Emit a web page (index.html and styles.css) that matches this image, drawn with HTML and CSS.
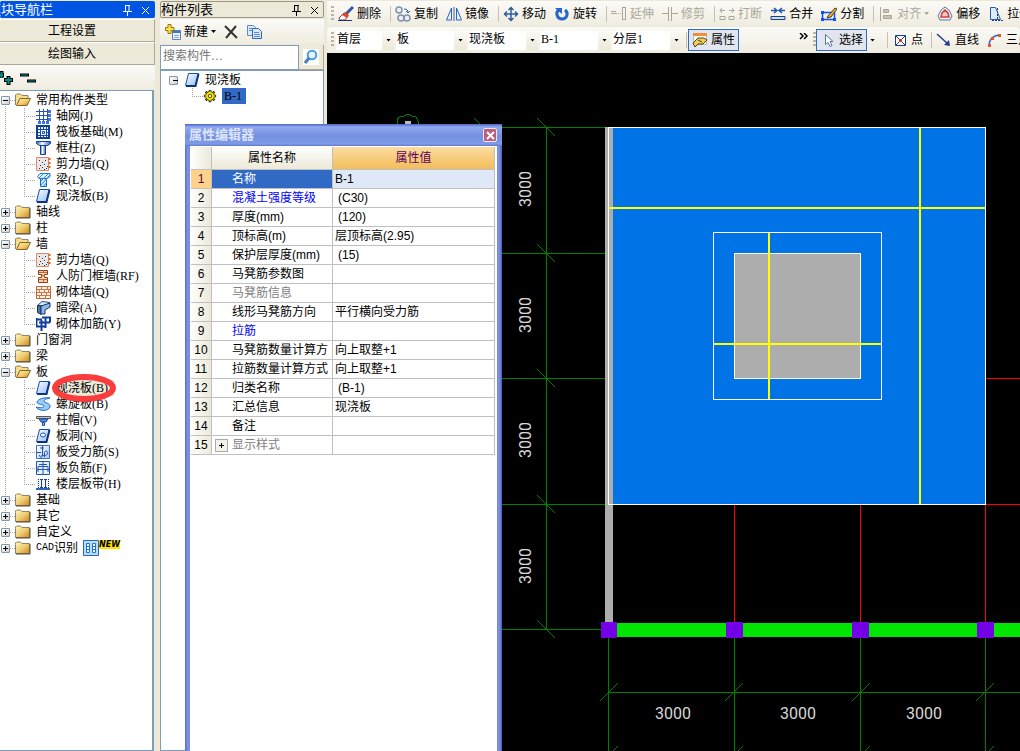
FILE: index.html
```html
<!DOCTYPE html>
<html lang="zh-CN">
<head>
<meta charset="utf-8">
<title>绘图输入</title>
<link rel="stylesheet" href="styles.css">
<script src="app.js" defer></script>
</head>
<body>
<svg class="defs" aria-hidden="true">
  <defs>
    <linearGradient id="gFold" x1="0" y1="0" x2="1" y2="1"><stop offset="0" stop-color="#fff3c0"/><stop offset=".5" stop-color="#f0cf74"/><stop offset="1" stop-color="#d08a08"/></linearGradient>
    <linearGradient id="gSlab" x1="0" y1="0" x2="1" y2="1"><stop offset="0" stop-color="#fff"/><stop offset="1" stop-color="#8fbdf8"/></linearGradient>
    <linearGradient id="gCol" x1="0" y1="0" x2="1" y2="0"><stop offset="0" stop-color="#2b62c8"/><stop offset=".4" stop-color="#fff"/><stop offset="1" stop-color="#2b62c8"/></linearGradient>
    <linearGradient id="gPale" x1="0" y1="0" x2="1" y2="1"><stop offset="0" stop-color="#fff"/><stop offset="1" stop-color="#a9c9f5"/></linearGradient>
  </defs>
  <symbol id="folder" viewBox="0 0 16 16"><path d="M.5 4.500V3l1-1h4l1.500 1.500H14.500V13.500H.5z" fill="url(#gFold)" stroke="#8c8468"/><path d="M15 4v10H1" fill="none" stroke="#4b4636"/></symbol>
  <symbol id="open" viewBox="0 0 16 16"><path d="M.5 13V3l1-1h4l1.500 1.500H13V7" fill="#f6dd8d" stroke="#8c8468"/><path d="M1.500 13.500L5 6.500h10.500L12 13.500z" fill="url(#gFold)" stroke="#8a661a"/></symbol>
  <symbol id="grid" viewBox="0 0 15 16"><path d="M3.500 1v13M7.500 1v13M11.500 1v13M0 3.500h13M0 7.500h13M0 11.500h13" stroke="#2a4fc0" fill="none"/><path d="M12 2h3v3h-3zM12 6h3v3h-3zM12 10h3v3h-3zM2 13h3v3H2zM6 13h3v3H6zM10 13h3v3h-3z" fill="#3f74dd"/></symbol>
  <symbol id="raft" viewBox="0 0 15 16"><path d="M1 2h12v12H1z" fill="#eaf3ff" stroke="#0f3f94" stroke-width="2"/><path d="M4.500 3v10M10.500 3v10M2 5.500h11M2 11.500h11M7.500 2v3M7.500 12v3M1 8.500h3M11 8.500h3" stroke="#174a9e" fill="none"/><path d="M6.500 7.500h2v2h-2z" fill="#fff" stroke="#174a9e"/></symbol>
  <symbol id="column" viewBox="0 0 15 16"><path d="M.5 1.500h14v2l-3 2h-8l-3-2z" fill="url(#gCol)" stroke="#173f96"/><path d="M4.500 5.500h5v9h-5z" fill="url(#gCol)" stroke="#173f96"/></symbol>
  <symbol id="shear" viewBox="0 0 15 16"><path d="M.5 1.500h12v13H.5z" fill="#e9e7e8" stroke="#d98a68"/><path d="M3 4h1v1H3zM6 6h1v1H6zM4 9h1v1H4zM8 8h1v1H8zM6 11h1v1H6zM10 12h1v1h-1zM9 4h1v1H9zM3 12h1v1H3zM11 10h1v1h-1zM8 13h1v1H8z" fill="#333"/><path d="M13.500 2v12" stroke="#d5661d" stroke-width="2" stroke-dasharray="2 2"/></symbol>
  <symbol id="beam" viewBox="0 0 15 16"><path d="M1.500 4.500L4 1.500h10v3l-3 2H3z" fill="#d9f0ff" stroke="#1b79ca"/><path d="M4.500 6.500h6v8h-6z" fill="#c4e8ff" stroke="#1769c0"/><path d="M5 13l9-10M3 6l5-5M5 9l7-7M8 14l3-4" fill="none" stroke="#2f8fdc"/></symbol>
  <symbol id="slab" viewBox="0 0 15 16"><path d="M3.500 1.500h10l-3 12H.5z" fill="url(#gSlab)" stroke="#154dab"/><path d="M13.500 2l-3 12H1" fill="none" stroke="#0d3480" stroke-width="2"/></symbol>
  <symbol id="frame" viewBox="0 0 15 16"><path d="M2.500 2.500h9v4h-3v3h3v5h-9v-5h3v-3h-3z" fill="#f7cfb0" stroke="#993f16"/><path d="M3 4.500h8M6 7.500h3M3 11.500h8M7.500 2v2M7.500 12v2" stroke="#bb6b3b"/></symbol>
  <symbol id="brick" viewBox="0 0 15 16"><path d="M.5 2.500h14v12H.5z" fill="#fff0e4" stroke="#c0673a"/><path d="M1 5.500h14M1 8.500h14M1 11.500h14M5.500 3v2.500M11.500 3v2.500M3.500 6v2.500M8.500 6v2.500M12.500 6v2.500M5.500 9v2.500M10.500 9v2.500M3.500 12v2M9.500 12v2" stroke="#cd7749" fill="none"/></symbol>
  <symbol id="hidden" viewBox="0 0 15 16"><path d="M1.500 5.500L6 1.500l8 1-4 3.500z" fill="#d8eafc" stroke="#244b89"/><path d="M1.500 5.500L5 6v8.500l-3.500-2z" fill="#50749f" stroke="#183663"/><path d="M5 6l9-3v4l-5 3v4H5z" fill="#8db6e4" stroke="#183663"/></symbol>
  <symbol id="rebar" viewBox="0 0 15 16"><path d="M.5 2v9M5.500 4v11M9.500 1v11M0 3.500h6M3 6.500h11M0 10.500h9M6 1.500h8v5" stroke="#113e9d" fill="none" stroke-width="2"/></symbol>
  <symbol id="spiral" viewBox="0 0 15 16"><path d="M14 2C8 1 2 3 1 6c0 3 7 2 7 4s-4 2-8 1c2 4 12 5 14 0 1-4-6-4-6-6s3-2 6-3z" fill="#9ccdfa" stroke="#1e6bc2"/></symbol>
  <symbol id="cap" viewBox="0 0 15 16"><path d="M.5 4.500h14v2H.5z" fill="#c2c5cb" stroke="#555"/><path d="M3 7h9l-2 3H5z" fill="#5d8de0" stroke="#1b49a3"/><path d="M6.500 10.500h2v3h-2z" fill="#afcaf7" stroke="#1b49a3"/></symbol>
  <symbol id="hole" viewBox="0 0 15 16"><path d="M3.500 1.500h10l-3 12H.5z" fill="url(#gSlab)" stroke="#154dab"/><path d="M13.500 2l-3 12H1" fill="none" stroke="#0d3480" stroke-width="2"/><ellipse cx="7" cy="7" rx="2.500" ry="2" fill="#fff" stroke="#154dab"/></symbol>
  <symbol id="stress" viewBox="0 0 15 16"><path d="M.5 1.500h13v13H.5z" fill="url(#gPale)" stroke="#3f6fc8"/><path d="M6.500 2v9c0 3-3 3-3 0M8 4H4M1 8.500h4M8.500 13V8.500c0-2 4-2 3 1s-4 2-6 2" stroke="#2450ac" fill="none"/></symbol>
  <symbol id="neg" viewBox="0 0 15 16"><path d="M.5 1.500h13v13H.5z" fill="#e8f1ff" stroke="#1d55b8"/><path d="M7 2v12M2 12V6.500h10V12M3 4.500h8M1 9.500h12" stroke="#1d55b8" fill="none"/></symbol>
  <symbol id="strip" viewBox="0 0 15 16"><path d="M0 3h14v8H0z" fill="#edf5ff"/><path d="M0 12h14v2H0z" fill="#2d65c2"/><path d="M5.500 3v9M9.500 3v9M4 3.500h3M8 3.500h3M4 11.500h3M8 11.500h3" stroke="#1b3e87"/><path d="M2.500 3v9M12.500 3v9" stroke="#333" stroke-dasharray="1 1"/></symbol>
  <symbol id="gear" viewBox="0 0 16 16"><path d="M8 1v14M1 8h14M3 3l10 10M13 3L3 13" stroke="#3a3600" stroke-width="3"/><circle cx="8" cy="8" r="5" fill="#f6e800" stroke="#3a3600"/><path d="M8 2v12M2 8h12M4 4l8 8M12 4l-8 8" stroke="#ffee00"/><circle cx="8" cy="8" r="2" fill="#fff8a0" stroke="#3a3600"/></symbol>
</svg>

<div class="app">
  <aside class="nav">
    <header class="title active"><span class="clipstart">模块导航栏</span>
      <button class="tb" aria-label="固定"><svg width="9" height="12" viewBox="0 0 9 12"><path d="M2.500 1v6M2 1.500h5M6 1v6M0 7.500h9M4.500 8v4" stroke="currentColor" fill="none"/></svg></button>
      <button class="tb" aria-label="关闭"><svg width="9" height="12" viewBox="0 0 9 12"><path d="M1 3l7 7M8 3l-7 7" stroke="currentColor"/></svg></button>
    </header>
    <button class="section">工程设置</button>
    <button class="section">绘图输入</button>
    <div class="navtools">
      <button class="bare" aria-label="全部展开"><svg width="14" height="16" viewBox="0 0 14 16"><path d="M0 5h4M1.500 1v7M4 10h9M8.500 6v9" stroke="#000" stroke-width="4"/><path d="M0 5h3M1.500 2v6M5 10h7M8.500 7v7" stroke="#008f88" stroke-width="2"/></svg></button>
      <button class="bare" aria-label="全部折叠"><svg width="18" height="16" viewBox="0 0 18 16"><path d="M0 5h9M7 11h9" stroke="#000" stroke-width="3"/><path d="M1 5h7M8 11h7" stroke="#008f88"/></svg></button>
    </div>
    <ul class="tree" id="tree"></ul>
  </aside>

  <section class="parts">
    <header class="title"><span>构件列表</span>
      <button class="tb" aria-label="固定"><svg width="9" height="12" viewBox="0 0 9 12"><path d="M2.500 1v6M2 1.500h5M6 1v6M0 7.500h9M4.500 8v4" stroke="currentColor" fill="none"/></svg></button>
      <button class="tb" aria-label="关闭"><svg width="9" height="12" viewBox="0 0 9 12"><path d="M1 3l7 7M8 3l-7 7" stroke="currentColor"/></svg></button>
    </header>
    <div class="parttools">
      <button class="bare"><svg width="16" height="16" viewBox="0 0 16 16"><path d="M7.500 6.500h8v9h-8z" fill="#eef5ff" stroke="#5c7fb5"/><path d="M8 7h7v2H8z" fill="#3a76d8"/><path d="M9 11.500h5M9 13.500h5" stroke="#7fa5de"/><path d="M3 .5h3v3h3v3H6v3H3v-3H.5v-3H3z" fill="#ffe14a" stroke="#9a7410"/></svg>新建<i class="arrow"></i></button>
      <button class="bare" aria-label="删除"><svg width="14" height="16" viewBox="0 0 14 16"><path d="M1 2l12 12M12 2L2 14" stroke="#333" stroke-width="2"/></svg></button>
      <button class="bare" aria-label="复制"><svg width="16" height="16" viewBox="0 0 16 16"><path d="M1.500 1.500h6l2 2v8h-8z" fill="#dceaff" stroke="#5b8ad0"/><path d="M6.500 4.500h6l3 3v7h-9z" fill="#dceaff" stroke="#2f63b5"/><path d="M3 4.500h3M3 6.500h3M8 8.500h5M8 10.500h6M8 12.500h6" stroke="#5b8ad0"/></svg></button>
    </div>
    <div class="search"><input type="text" aria-label="搜索构件" placeholder="搜索构件…"><button aria-label="搜索"><svg width="16" height="16" viewBox="0 0 16 16"><path d="M0 0h16v16H0z" fill="#fff"/><circle cx="9" cy="6" r="4.300" fill="#e4f5ff" stroke="#4c9cdc" stroke-width="2"/><path d="M6 9l-4 5" stroke="#3f7fc8" stroke-width="3"/></svg></button></div>
    <ul class="parttree">
      <li class="root"><i class="toggle"></i><svg width="15" height="16"><use href="#slab"/></svg>现浇板</li>
      <li class="leaf"><svg width="14" height="14"><use href="#gear"/></svg><span class="picked">B-1</span></li>
    </ul>
  </section>

  <main class="work">
    <div class="bar" id="bar"></div>
    <div class="bar second">
      <i class="grip"></i>
      <span class="combo narrow"><select aria-label="楼层"><option>首层</option></select><i class="arrow"></i></span>
      <span class="combo"><select aria-label="类型"><option>板</option></select><i class="arrow"></i></span>
      <span class="combo"><select aria-label="构件类型"><option>现浇板</option></select><i class="arrow"></i></span>
      <span class="combo"><select aria-label="构件"><option>B-1</option></select><i class="arrow"></i></span>
      <span class="combo"><select aria-label="分层"><option>分层1</option></select><i class="arrow"></i></span>
      <i class="sep tight"></i>
      <button class="tool on"><svg width="16" height="16" viewBox="0 0 16 16"><path d="M1.500 1.500h13v11h-13z" fill="#fff" stroke="#b9b9b9"/><path d="M1 1h14v3H1z" fill="#f08d3c"/><path d="M1 11l5-5h6l3 2-4 4H6l-3 3z" fill="#f3cc57" stroke="#4d431d"/><path d="M6 8l4 2" stroke="#4d431d"/></svg>属性</button>
      <button class="more" aria-label="更多"><svg width="9" height="7" viewBox="0 0 9 7"><path d="M1 0l3 3-3 3M5 0l3 3-3 3" fill="none" stroke="#000" stroke-width="1.500"/></svg></button>
      <i class="grip"></i>
      <button class="tool on pick"><svg width="16" height="16" viewBox="0 0 16 16"><path d="M5.500 2.500v10l2.500-2 2 4 2-1-2-4h3z" fill="#fff" stroke="#5575a5"/></svg>选择</button>
      <i class="arrow free"></i>
      <i class="sep"></i>
      <button class="tool"><svg width="16" height="16" viewBox="0 0 16 16"><path d="M3.500 3.500h10v10h-10z" fill="#fff" stroke="#1a3a92"/><path d="M4 4l9 9M13 4l-9 9" stroke="#1a3a92"/><path d="M7 7h3v3H7z" fill="#e0302c"/></svg>点</button>
      <i class="sep"></i>
      <button class="tool"><svg width="16" height="16" viewBox="0 0 16 16"><path d="M1 2l11 10" stroke="#1c3f94" stroke-width="1.500"/><path d="M14 14l-6-1 5-5z" fill="#1c3f94"/></svg>直线</button>
      <button class="tool"><svg width="16" height="16" viewBox="0 0 16 16"><path d="M2 14C2 7 7 3 13 3" stroke="#3d6bc0" stroke-width="1.600" fill="none"/><path d="M1 12h3v3H1zM4 5h3v3H4zM11 2h3v3h-3z" fill="#e25630"/></svg>三点画弧</button>
    </div>
    <svg class="drawing" role="img" aria-label="平面图"><g transform="translate(-327 -53)" shape-rendering="crispEdges">
      <g stroke="#008000" fill="none">
        <path d="M327 127.500H608M327 253.500H605M327 378.500H605M327 504.500H605M327 629.500H601M546.500 127V629"/>
        <path d="M608.500 638V751M734.500 638V751M860.500 638V751M985.500 638V751M608 692.500H1020"/>
        <path d="M537 118l18 18M537 244l18 18M537 369l18 18M537 495l18 18M537 620l18 18M474 118l18 18"/>
        <path d="M600 701l18-18M725 701l18-18M852 701l18-18M976 701l18-18M600 764l18-18M725 764l18-18M852 764l18-18M976 764l18-18"/>
        <path d="M397 124v-4l2-3 5-1 4-2 4 2 4 1 2 4v5"/>
      </g>
      <path d="M405 121h6v3h-6z" fill="#bbb"/>
      <path d="M734.500 504V622M860.500 504V622M985.500 504V622M985 378.500H1020M985 504.500H1020" stroke="#f00"/>
      <path d="M605 127h8v495h-8z" fill="#adadad"/>
      <path d="M613 127h372v377H613z" fill="#0073e6"/>
      <path d="M608.500 127.500H985.500V504.500H608.500z" fill="none" stroke="#fff"/>
      <path d="M713.500 232.500H881.500V399.500H713.500z" fill="none" stroke="#fff"/>
      <path d="M734.500 253.500H860.500V378.500H734.500z" fill="#adadad" stroke="#fff"/>
      <path d="M609 208H985M920 128V504M714 344H881M769 233V399" stroke="#ff0" stroke-width="2"/>
      <path d="M617 623H1020v14H617z" fill="#00e600"/>
      <path d="M601 622h16v16h-16zM726 622h17v16h-17zM852 622h17v16h-17zM977 622h17v16h-17z" fill="#7300e6"/>
      <g class="dims" text-anchor="middle">
        <text x="673" y="719">3000</text><text x="798" y="719">3000</text><text x="924" y="719">3000</text>
        <text transform="translate(531 189) rotate(-90)">3000</text><text transform="translate(531 315) rotate(-90)">3000</text><text transform="translate(531 440) rotate(-90)">3000</text><text transform="translate(531 566) rotate(-90)">3000</text>
      </g>
    </g></svg>
  </main>
</div>

<section class="editor" aria-labelledby="edTitle">
  <header><h2 id="edTitle">属性编辑器</h2><button aria-label="关闭"><svg width="11" height="11" viewBox="0 0 11 11"><path d="M2 2l7 7M9 2l-7 7" stroke="#fff" stroke-width="2"/></svg></button></header>
  <div class="sheet">
    <table>
      <thead><tr><th class="num"></th><th class="name">属性名称</th><th class="val">属性值</th></tr></thead>
      <tbody id="props"></tbody>
    </table>
  </div>
</section>
</body>
</html>
```
FILE: styles.css
```css
* { box-sizing: border-box; }
body { margin: 0; overflow: hidden; background: #ece9d8; color: #000; font: 12px/16px "Liberation Serif", "Noto Sans CJK SC", serif; }
button, input, select { font: inherit; color: inherit; margin: 0; border-radius: 0; }
button { background: none; border: 0; padding: 0; }
ul { list-style: none; margin: 0; padding: 0; }
svg { flex: none; }
.defs { position: absolute; width: 0; height: 0; }
.app { display: flex; height: 100vh; }

/* module navigation */
.nav { display: flex; flex-direction: column; width: 155px; flex: none; }
.title { display: flex; align-items: center; gap: 9px; height: 17px; margin: 1px 0; padding-right: 4px; font-size: 13px; white-space: nowrap; flex: none; border: 1px solid #9a978a; border-left: 0; border-radius: 2px; overflow: hidden; }
.title span { flex: 1; min-width: 0; }
.title.active { background: #0054e3; color: #fff; border-color: #0054e3; }
.clipstart { text-indent: -12px; }
.tb { display: flex; }
.section { flex: none; height: 23px; border-top: 1px solid #fff; border-bottom: 1px solid #aca899; border-right: 1px solid #aca899; padding-right: 10px; }
.navtools { display: flex; align-items: center; gap: 6px; height: 25px; flex: none; background: linear-gradient(#fbfaf7, #efecdf); }
.bare { display: flex; align-items: center; gap: 3px; }
.tree { flex: 1; min-height: 0; padding-top: 1px; margin-right: 1px; background: #fff; border: 1px solid #7f9db9; border-left: 0; border-right-width: 2px; white-space: nowrap; }
.tree li { --v: repeating-linear-gradient(#aaa492 0 1px, transparent 1px 2px); --h: repeating-linear-gradient(90deg, #aaa492 0 1px, transparent 1px 2px); display: flex; align-items: center; height: 16px; }
.tree .group { gap: 5px; padding-left: 1px; background: var(--v) 5px 0 / 1px 16px no-repeat, var(--h) 10px 8px / 6px 1px no-repeat; }
.tree .item { gap: 5px; padding-left: 36px; background: var(--v) 5px 0 / 1px 16px no-repeat, var(--v) 24px 0 / 1px 16px no-repeat, var(--h) 24px 8px / 12px 1px no-repeat; }
.tree .item.last { background-size: 1px 16px, 1px 8px, 12px 1px; }
.tree .group:first-child { background-position: 5px 8px, 10px 8px; }
.tree .group:last-child { background-size: 1px 8px, 6px 1px; }
.tree .marked { position: relative; padding-right: 6px; background: #ece9d8; }
.ring { position: absolute; left: -6px; top: -7px; }
.toggle { display: grid; place-items: center; width: 9px; height: 9px; flex: none; border: 1px solid #7898b5; border-radius: 1px; background: linear-gradient(135deg, #fff, #d6d0c0); }
.half { font: 10px/16px "Liberation Mono", monospace; margin-right: -5px; }
.new { display: flex; align-items: center; }
.new b { font: italic bold 8px/9px "DejaVu Sans", sans-serif; background: #ffe100; align-self: flex-start; }

/* component list */
.parts { display: flex; flex-direction: column; flex: none; width: 164px; margin: 0 3px 0 5px; }
.parts .title { border-left: 1px solid #9a978a; }
.parttools { display: flex; align-items: center; gap: 8px; height: 25px; padding-left: 5px; flex: none; background: linear-gradient(#fbfaf7, #efecdf); }
.arrow { flex: none; width: 5px; height: 3px; background: currentColor; clip-path: polygon(0 0, 100% 0, 50% 100%); }
.search { display: flex; height: 25px; margin-top: 1px; flex: none; }
.search input { flex: 1; min-width: 0; padding: 0 2px 4px; border: 1px solid #7f9db9; background: #fff; }
.search input::placeholder { color: #777; opacity: 1; }
.search button { display: grid; place-items: center; width: 25px; border-right: 1px solid #aca899; border-bottom: 1px solid #aca899; }
.parttree { flex: 1; border: 1px solid #7f9db9; background: #fff; padding-top: 1px; }
.parttree li { display: flex; align-items: center; height: 16px; }
.root { gap: 5px; padding-left: 8px; }
.root svg { margin-left: 2px; }
.leaf { gap: 5px; padding-left: 42px; background: repeating-linear-gradient(90deg, #aaa492 0 1px, transparent 1px 2px) 31px 8px / 11px 1px no-repeat, repeating-linear-gradient(#aaa492 0 1px, transparent 1px 2px) 31px 0 / 1px 8px no-repeat; }
.picked { background: #316ac5; padding: 0 4px 0 2px; }

/* toolbars and drawing */
.work { display: flex; flex-direction: column; flex: 1; min-width: 0; }
.bar { display: flex; align-items: center; height: 25px; margin-top: 1px; padding-left: 4px; flex: none; overflow: hidden; white-space: nowrap; background: linear-gradient(#fbfaf7, #efecdf); }
.bar.second { height: 26px; border-radius: 4px; }
.grip { flex: none; width: 3px; height: 16px; background: repeating-linear-gradient(#b9b5a4 0 2px, transparent 2px 4px); }
.sep { flex: none; width: 1px; height: 16px; margin-left: 4px; background: #c5c2b2; }
.tight { margin-left: 2px; }
.tool { display: flex; align-items: center; flex: none; gap: 3px; height: 22px; padding: 0 4px; }
.bar:first-child .sep { margin-left: 5px; }
.off { color: #aca899; }
.on { border: 1px solid #316ac5; background: #e1e6ee; padding: 0 3px; margin-left: 1px; }
.second .pick { margin-left: 0; }
.combo { display: grid; grid-template-columns: 1fr 12px; align-items: center; width: 70px; height: 19px; flex: none; margin-right: 2px; background: linear-gradient(#fbfaf7, #ece9d8) right / 12px 100% no-repeat #fff; }
.narrow { width: 58px; margin-left: 2px; }
.combo select { grid-area: 1 / 1 / 2 / 3; appearance: none; border: 0; padding: 0 0 3px 1px; background: none; width: 100%; }
.combo .arrow { grid-area: 1 / 2; margin-left: 4px; pointer-events: none; }
.more { display: flex; margin: 0 5px 7px 60px; }
.free { margin: 0 8px 0 3px; }
.drawing { display: block; flex: 1; min-height: 0; width: 100%; background: #000; }
.dims { font: 16px "Roboto", sans-serif; fill: #d8d8d8; }

/* floating property editor */
.editor { position: absolute; left: 185px; top: 124px; bottom: 0; width: 317px; display: flex; flex-direction: column; padding: 0 5px; background: linear-gradient(90deg, #5a6fd0, #8295e6 3px, #7286dd 5px, #7286dd 312px, #8295e6 314px, #4c5dc0); font-family: "Liberation Sans", "Noto Sans CJK SC", sans-serif; }
.editor header { display: flex; align-items: center; justify-content: space-between; height: 22px; margin: 0 -5px; padding: 0 5px 0 4px; flex: none; background: linear-gradient(#4d62c8, #8fa9ee 3px, #7590e0 12px, #7f9ae6 20px, #5f77d0); }
.editor h2 { margin: 0; font-size: 13px; line-height: 18px; color: #dbe4fb; }
.editor header button { display: grid; place-items: center; width: 14px; height: 14px; border: 1px solid #f0e4ef; border-radius: 2px; background: #b9607c; }
.sheet { flex: 1; padding: 1px 2px 0 1px; background: #fff; }
table { border-collapse: separate; border-spacing: 0; table-layout: fixed; width: 100%; }
th, td { border-right: 1px solid #c0c0c0; border-bottom: 1px solid #c0c0c0; padding: 0 2px; height: 19px; line-height: 18px; font-weight: normal; white-space: nowrap; overflow: hidden; text-align: left; }
thead th { height: 23px; text-align: center; background: linear-gradient(#fefefc, #ece9d8); }
thead .val { background: linear-gradient(#fbdc9f, #f3bd5b); color: #5c005c; }
.num { width: 21px; padding: 0; text-align: center; background: linear-gradient(90deg, #fefefc, #ece9d8); }
.name { width: 121px; }
tbody .name { padding: 0 0 0 20px; }
tbody .plus { padding-left: 3px; }
.plus div { display: flex; align-items: center; gap: 4px; }
.plus button { width: 13px; height: 13px; display: grid; place-items: center; border: 1px solid #aaa; background: #f3f1e8; }
.current .num { background: #ffd28a; color: #5c005c; }
.current .name { background: #316ac5; color: #fff; }
.current .val { background: #dfe8f6; }
.blue { color: #00f; }
.gray { color: #808080; }
td.inset { padding-left: 5px; }
```
FILE: app.js
```js
const use = (id, w = 15) => `<svg width="${w}" height="16"><use href="#${id}"/></svg>`;
const plus = '<svg width="7" height="7"><path d="M1 3.5h5M3.5 1v5" stroke="#000"/></svg>';
const minus = '<svg width="7" height="7"><path d="M1 3.5h5" stroke="#000"/></svg>';

const groups = [
  ['常用构件类型', [['grid', '轴网(J)'], ['raft', '筏板基础(M)'], ['column', '框柱(Z)'], ['shear', '剪力墙(Q)'], ['beam', '梁(L)'], ['slab', '现浇板(B)']]],
  ['轴线'], ['柱'],
  ['墙', [['shear', '剪力墙(Q)'], ['frame', '人防门框墙(RF)'], ['brick', '砌体墙(Q)'], ['hidden', '暗梁(A)'], ['rebar', '砌体加筋(Y)']]],
  ['门窗洞'], ['梁'],
  ['板', [['slab', '现浇板(B)', true], ['spiral', '螺旋板(B)'], ['cap', '柱帽(V)'], ['hole', '板洞(N)'], ['stress', '板受力筋(S)'], ['neg', '板负筋(F)'], ['strip', '楼层板带(H)']]],
  ['基础'], ['其它'], ['自定义'], ['<span class="half">CAD</span>识别', null, true]
];
const ring = '<svg class="ring" width="68" height="32"><ellipse cx="34" cy="15" rx="29" ry="11" fill="none" stroke="#fa3c3c" stroke-width="6"/></svg>';
const badge = '<span class="new"><svg width="16" height="16"><path d="M.5.5h15v15H.5z" fill="#b8dcff" stroke="#2c66bd"/><path d="M3.500 3.500h3v9h-3zM9.500 3.500h3v9h-3z" fill="#fff" stroke="#1e73d8"/><path d="M3 6.500h4M9 6.500h4M3 9.500h4M9 9.500h4" stroke="#1e73d8"/></svg><b>NEW</b></span>';
document.getElementById('tree').innerHTML = groups.map(([name, items, isNew]) =>
  `<li class="group"><i class="toggle">${items ? minus : plus}</i>${use(items ? 'open' : 'folder', 16)}${name}${isNew ? badge : ''}</li>` +
  (items || []).map(([icon, label, marked], i) =>
    `<li class="item${i === items.length - 1 ? ' last' : ''}">${use(icon)}${marked ? `<span class="marked">${label}${ring}</span>` : label}</li>`).join('')
).join('');
document.querySelector('.root .toggle').innerHTML = minus;

const art = {
  erase: '<path d="M15 1L8 8" stroke="#355aa5" stroke-width="3"/><path d="M6 7l4 3-3 4H2l-1-2z" fill="#fff" stroke="#8b3a3a"/><path d="M7 6l4 3-2 3-5-3z" fill="#d9482f"/><path d="M0 14.500h14" stroke="#1d3570"/>',
  copy: '<circle cx="4" cy="4" r="3" fill="#eef" stroke="#7f93ad" stroke-width="1.500"/><circle cx="6" cy="12" r="3" fill="#eef" stroke="#7f93ad" stroke-width="1.500"/><circle cx="12" cy="12" r="3" fill="#eef" stroke="#7f93ad" stroke-width="1.500"/><path d="M9 3c3 0 4 1 4 4M11 5l2 2 2-2" stroke="#2860b4" fill="none"/>',
  mirror: '<path d="M5.500 2v12h-5zM10.500 2v12h5z" fill="#e8f1ff" stroke="#2f64b6"/><path d="M8 1v14" stroke="#2f64b6"/>',
  move: '<path d="M8 1v14M1 8h14M5.500 4L8 1.500 10.500 4M5.500 12L8 14.500 10.500 12M4 5.500L1.500 8 4 10.500M12 5.500L14.500 8 12 10.500" fill="none" stroke="#2c5d9c" stroke-width="1.500"/>',
  rotate: '<path d="M5 3.500C1 7 3 13 8 13s7-6 3-9" fill="none" stroke="#2965c9" stroke-width="3"/><path d="M1 2h7v6z" fill="#2965c9"/>',
  extend: '<path d="M0 7.500h6M0 5.500h5M11.500 1v13M14.500 1v13M11 1.500h4M11 13.500h4" stroke="#aaa798" fill="none"/><path d="M7 7.500h4" stroke="#aaa798" stroke-dasharray="1 1"/>',
  trim: '<path d="M0 7.500h6M10 7.500h6M6.500 1v14M9.500 1v14" stroke="#aaa798"/>',
  cut: '<path d="M1 4.500h5M10 4.500h5M3 2L1 4.500 3 7M13 2l2 2.500L13 7M1 10.500h5v3H1zM10 10.500h5v3h-5z" stroke="#aaa798" fill="none"/>',
  join: '<path d="M1 4.500h5M10 4.500h5M4 2l3 2.500L4 7M12 2L9 4.500 12 7" stroke="#1d55b0" stroke-width="1.500" fill="none"/><path d="M1 10.500h14v3H1z" fill="#c9defa" stroke="#1d3f80"/>',
  split: '<path d="M1.500 6.500h12v7h-12z" fill="#e8f2ff" stroke="#1550df" stroke-width="1.500"/><path d="M7 10l7-8 2 1-6 8-4 1z" fill="#e5ae45" stroke="#5a3b10"/><path d="M0 5h3v3H0zM0 12h3v3H0zM12 12h3v3h-3z" fill="#1550df"/>',
  align: '<path d="M2.500 1v14" stroke="#aaa798"/><path d="M5.500 3.500h5v3h-5zM5.500 9.500h8v3h-8z" fill="#c8c5b7" stroke="#aaa798"/>',
  offset: '<path d="M8 1l4 3 3 6-2 4H3l-2-4 3-6z" fill="#eef2f8" stroke="#5777aa"/><path d="M8 4l3 3 1 4H4l1-4z" fill="#f6c9c2" stroke="#d04236" stroke-width="1.500"/>',
  pull: '<path d="M2.500 1.500h5l5 12h-10z" fill="#dcecff" stroke="#2c5ca8"/><path d="M9.500 2v12M4 14.500h11" stroke="#1d3f80" stroke-dasharray="2 1"/>'
};
const tools = [
  ['erase', '删除'], 0, ['copy', '复制'], ['mirror', '镜像'], 0, ['move', '移动'], ['rotate', '旋转'], 0,
  ['extend', '延伸', 'off'], ['trim', '修剪', 'off'], 0, ['cut', '打断', 'off'], ['join', '合并'], ['split', '分割'], 0,
  ['align', '对齐', 'off', true], ['offset', '偏移'], ['pull', '拉伸']
];
document.getElementById('bar').innerHTML = '<i class="grip"></i>' + tools.map(t => t
  ? `<button class="tool ${t[2] || ''}"><svg width="16" height="16" viewBox="0 0 16 16">${art[t[0]]}</svg>${t[1]}${t[3] ? '<i class="arrow"></i>' : ''}</button>`
  : '<i class="sep"></i>').join('');

const props = [
  ['名称', 'B-1', '', 'current'], ['混凝土强度等级', '(C30)', 'blue'], ['厚度(mm)', '(120)'], ['顶标高(m)', '层顶标高(2.95)'],
  ['保护层厚度(mm)', '(15)'], ['马凳筋参数图', ''], ['马凳筋信息', '', 'gray'], ['线形马凳筋方向', '平行横向受力筋'], ['拉筋', '', 'blue'],
  ['马凳筋数量计算方', '向上取整+1'], ['拉筋数量计算方式', '向上取整+1'], ['归类名称', '(B-1)'], ['汇总信息', '现浇板'], ['备注', ''], ['显示样式', '', 'gray']
];
document.getElementById('props').innerHTML = props.map(([name, value, tone = '', row = ''], i) => {
  const label = i === 14 ? `<div><button aria-label="展开">${plus}</button>${name}</div>` : name;
  return `<tr class="${row}"><td class="num">${i + 1}</td><td class="name ${tone}${i === 14 ? ' plus' : ''}">${label}</td><td class="val${value[0] === '(' ? ' inset' : ''}">${value}</td></tr>`;
}).join('');
```
